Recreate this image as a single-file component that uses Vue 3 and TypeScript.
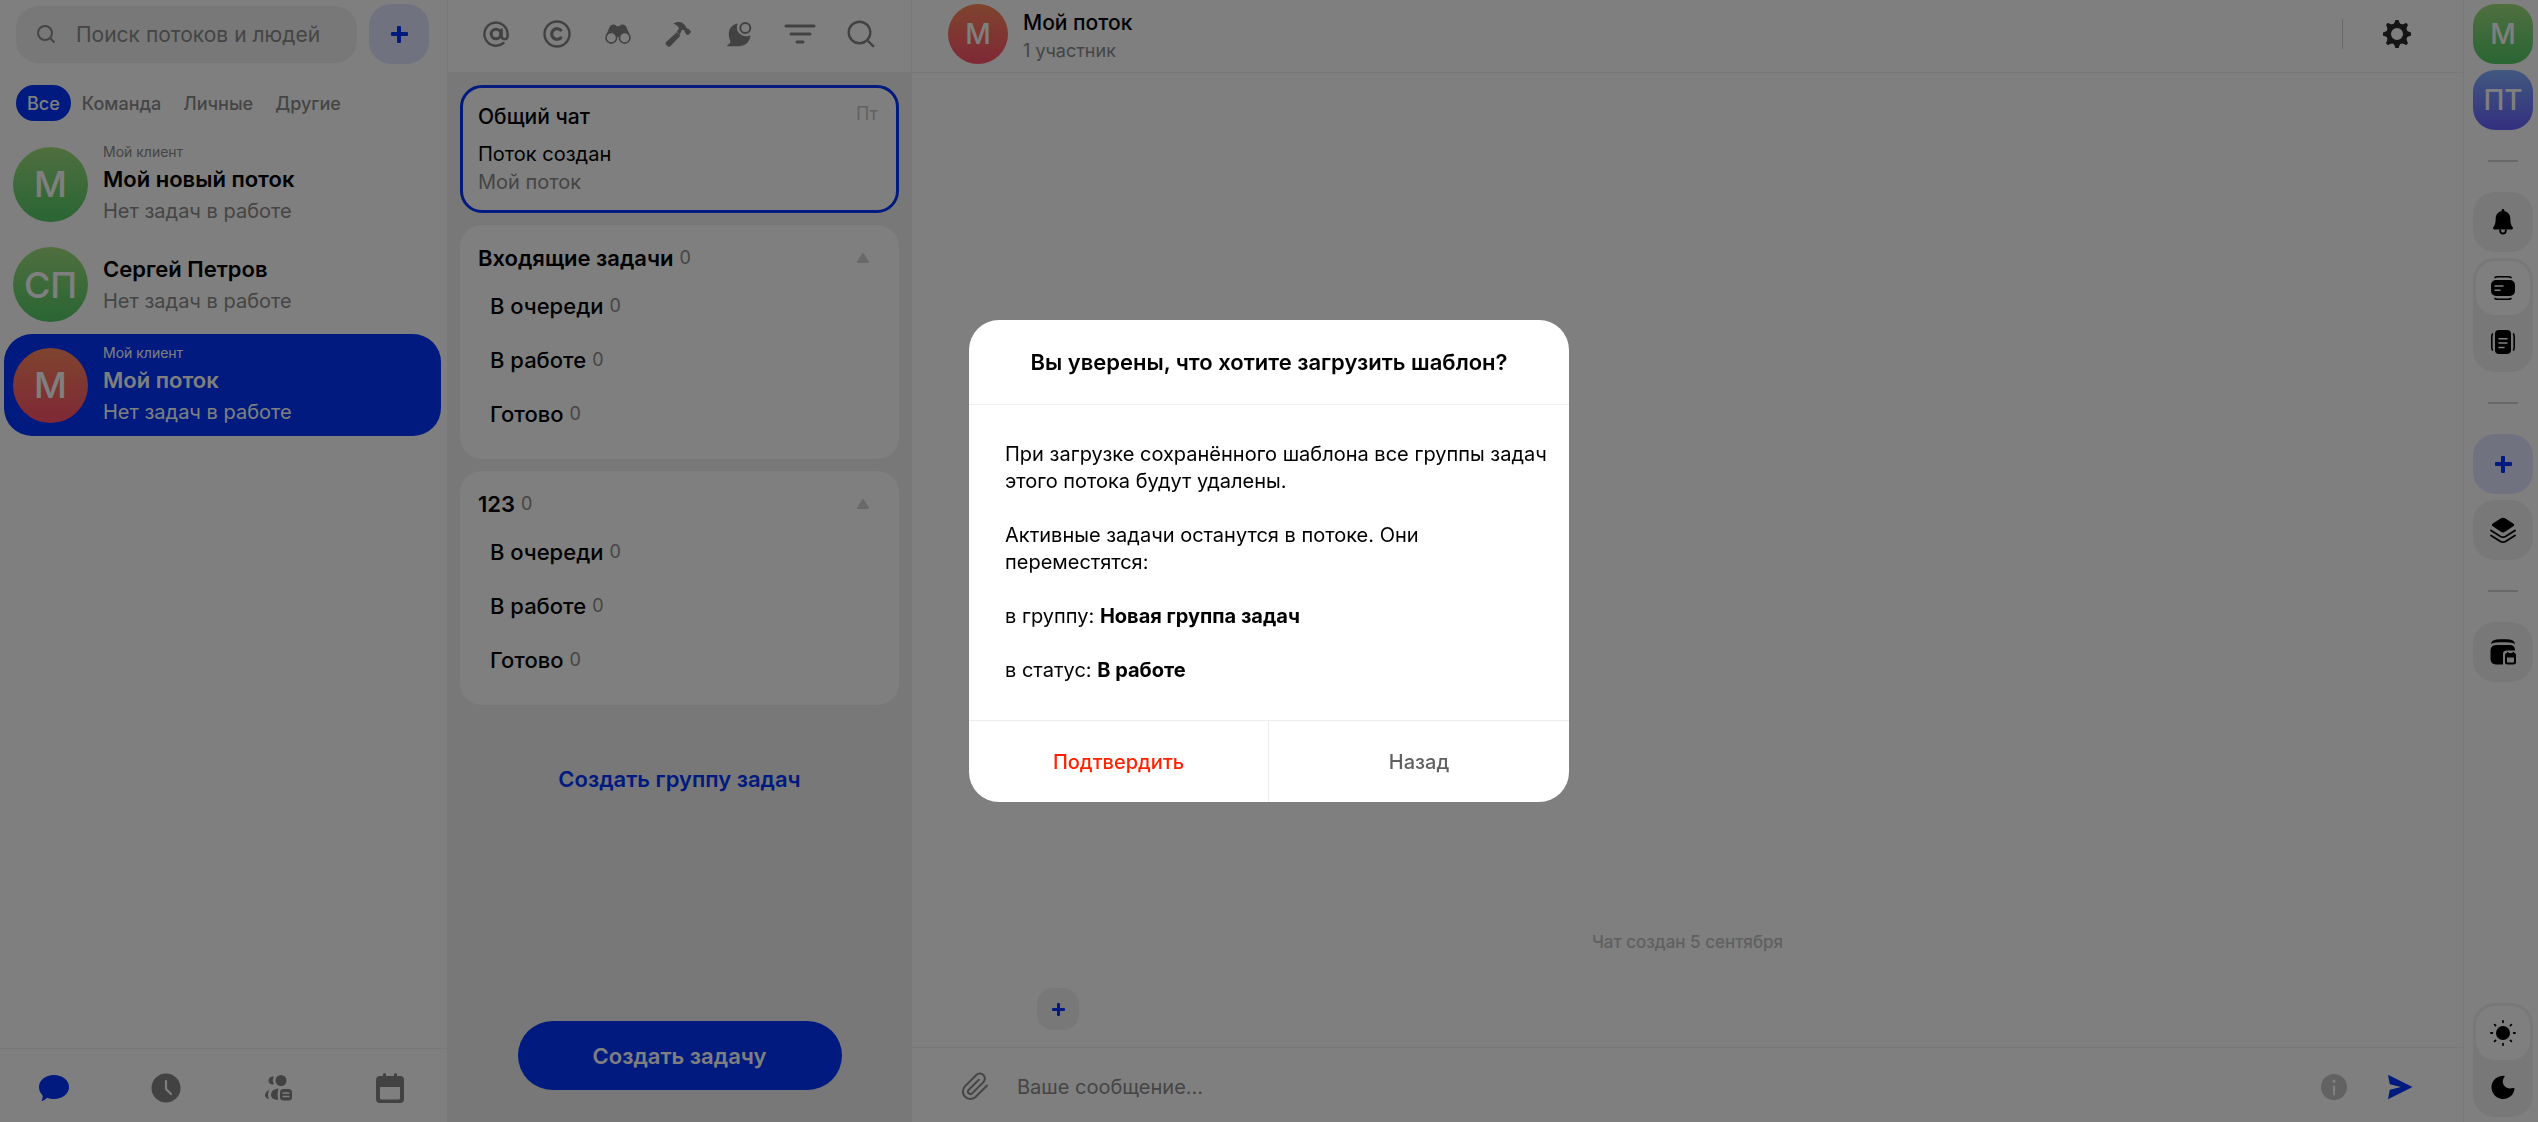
<script setup lang="ts">
import { ref } from 'vue'

interface Flow {
  id: number
  initials: string
  tone: 'green' | 'red'
  client?: string
  title: string
  status: string
}

interface TaskGroup {
  name: string
  count: number
  columns: { name: string; count: number }[]
}

const tabs = ['Все', 'Команда', 'Личные', 'Другие']
const activeTab = ref('Все')
const activeFlow = ref(3)
const search = ref('')
const message = ref('')

const flows: Flow[] = [
  { id: 1, initials: 'М', tone: 'green', client: 'Мой клиент', title: 'Мой новый поток', status: 'Нет задач в работе' },
  { id: 2, initials: 'СП', tone: 'green', title: 'Сергей Петров', status: 'Нет задач в работе' },
  { id: 3, initials: 'М', tone: 'red', client: 'Мой клиент', title: 'Мой поток', status: 'Нет задач в работе' },
]

const columns = () => [
  { name: 'В очереди', count: 0 },
  { name: 'В работе', count: 0 },
  { name: 'Готово', count: 0 },
]

const groups: TaskGroup[] = [
  { name: 'Входящие задачи', count: 0, columns: columns() },
  { name: '123', count: 0, columns: columns() },
]

const gearTeeth = [0, 45, 90, 135, 180, 225, 270, 315]
</script>

<template>
  <div class="app">
    <aside class="flows">
      <div class="flows-top">
        <label class="search">
          <svg width="20" height="20" viewBox="0 0 20 20" fill="none" stroke="currentColor" stroke-width="2">
            <circle cx="9" cy="9" r="7" /><path d="M14 14l4 4" stroke-linecap="round" />
          </svg>
          <input v-model="search" type="text" placeholder="Поиск потоков и людей" aria-label="Поиск потоков и людей" />
        </label>
        <button class="tile tint" aria-label="Создать поток">
          <svg width="18" height="18" viewBox="0 0 18 18" fill="currentColor"><rect x="7" y="1" width="4" height="17" rx="1" /><rect x="1" y="7" width="17" height="4" rx="1" /></svg>
        </button>
      </div>

      <div class="tabs">
        <button v-for="tab in tabs" :key="tab" class="tab" :class="{ active: tab === activeTab }" @click="activeTab = tab">{{ tab }}</button>
      </div>

      <div class="flow-list">
        <button v-for="flow in flows" :key="flow.id" class="flow" :class="{ active: flow.id === activeFlow }" @click="activeFlow = flow.id">
          <span class="avatar large" :class="flow.tone">{{ flow.initials }}</span>
          <span class="flow-text">
            <span v-if="flow.client" class="flow-client">{{ flow.client }}</span>
            <span class="flow-title">{{ flow.title }}</span>
            <span class="flow-status">{{ flow.status }}</span>
          </span>
        </button>
      </div>

      <nav class="bottom-nav">
        <button class="current" aria-label="Чаты">
          <svg width="32" height="28" viewBox="0 0 32 28" fill="currentColor"><path d="M16 1c8.500 0 15 5.200 15 12s-6.500 12-15 12c-2.600 0-4.800-.4-7-1.300C7.500 25.500 5.500 27 3.400 27c1-1.500 1.500-3.500 1.200-5.600C2.200 19.200 1 16.300 1 13 1 6.200 7.500 1 16 1z" /></svg>
        </button>
        <button aria-label="Время">
          <svg width="30" height="30" viewBox="0 0 30 30"><circle cx="15" cy="15" r="14.500" fill="currentColor" /><path d="M15 8v8l5 5" fill="none" stroke="#fff" stroke-width="2.200" stroke-linecap="round" stroke-linejoin="round" /></svg>
        </button>
        <button aria-label="Команда">
          <svg width="28" height="28" viewBox="0 0 28 28" fill="currentColor">
            <circle cx="17" cy="6.500" r="5.500" /><path d="M10 2.800a4 4 0 1 0 0 7.400 7 7 0 0 1 0-7.400z" />
            <path d="M5.500 16C2.800 16.800 1 19 1 21.500c0 1.700 1.600 2.900 4 3.500-1.500-3.200-1.200-6.300.5-9z" />
            <path d="M14.500 14.500C9.600 14.800 7 17.500 7 21c0 3.200 3 4.800 7.300 5-1-3.500-.9-8 .2-11.500z" />
            <rect x="16" y="15" width="12" height="11.500" rx="3.500" /><path d="M18.500 19h7M18.500 22.500h7" stroke="#fff" stroke-width="1.500" />
          </svg>
        </button>
        <button aria-label="Календарь">
          <svg width="28" height="30" viewBox="0 0 28 30" fill="currentColor"><path fill-rule="evenodd" d="M4 3h3V1.500a1.500 1.500 0 0 1 3 0V3h8V1.500a1.500 1.500 0 0 1 3 0V3h3a4 4 0 0 1 4 4v19a4 4 0 0 1-4 4H4a4 4 0 0 1-4-4V7a4 4 0 0 1 4-4zm0 11v11a1.500 1.500 0 0 0 1.500 1.500h17A1.500 1.500 0 0 0 24 25V14z" /></svg>
        </button>
      </nav>
    </aside>

    <section class="board">
      <header class="board-tools">
        <button aria-label="Упоминания">
          <svg width="26" height="26" viewBox="0 0 26 26" fill="none" stroke="currentColor" stroke-linecap="round">
            <path d="M20.500 22A11.600 11.600 0 1 1 24.600 13v2c0 2-1.300 3.200-3 3.200s-3-1.200-3-3.200V8.500" stroke-width="2.400" /><circle cx="13" cy="13" r="4.800" stroke-width="3" />
          </svg>
        </button>
        <button aria-label="Созданные мной">
          <svg width="28" height="28" viewBox="0 0 28 28" fill="none" stroke="currentColor">
            <circle cx="14" cy="14" r="12.500" stroke-width="2.400" /><path d="M18.500 11.200a5.300 5.300 0 1 0 0 5.600" stroke-width="3.200" />
          </svg>
        </button>
        <button aria-label="Наблюдаю">
          <svg width="26" height="26" viewBox="0 0 26 26">
            <path fill="currentColor" d="M1 14.500L4.600 6C5.300 4.300 7 3.300 9 3.500c1.300.1 2.100.8 2.500 1.700h3c.4-.9 1.200-1.600 2.500-1.700 2-.2 3.700.8 4.400 2.500l3.600 8.500-5 3-5-1.500h-4l-5 1.500z" />
            <circle cx="6.300" cy="16.800" r="5.300" fill="#fff" stroke="currentColor" stroke-width="1.600" /><circle cx="19.700" cy="16.800" r="5.300" fill="#fff" stroke="currentColor" stroke-width="1.600" />
          </svg>
        </button>
        <button aria-label="В работе">
          <svg width="26" height="26" viewBox="0 0 26 26" fill="currentColor">
            <path d="M11.800 11.200l3.600 3.600L5.300 25.200c-.8.800-1.900.8-2.700 0L1.100 23.700c-.8-.8-.8-1.900 0-2.700z" />
            <path d="M8.400 2.700C11.500.5 16.200.6 18.700 3l1.900 2c.4.400.6 1 .6 1.700l.9.900 1-.2 2.500 2.500c.5.500.5 1 0 1.500l-2.200 2.300c-.5.500-1 .5-1.500 0L19.600 11l.1-1.200-.9-.9c-.6.200-1.200.1-1.700-.4l-2.400 5.200-2.900-2.900 2.200-3.400c-.8-2.500-2.800-4-5.600-4.700z" />
          </svg>
        </button>
        <button aria-label="Непрочитанные">
          <svg width="26" height="26" viewBox="0 0 26 26">
            <path fill="currentColor" d="M12 2.500C6 3.500 2.500 8 2.800 13.500c.1 3 .8 4.500 1.500 6.500.5 1.500-1 3.200-2.800 4-.7.500-.4 1.300.5 1.300h10.500c6.500 0 11.700-4.500 12-11-5.500 2.500-12.500-.500-13.500-6C10.700 6 11 4 12 2.500z" />
            <circle cx="19.300" cy="7" r="5" fill="none" stroke="currentColor" stroke-width="2" />
          </svg>
        </button>
        <button aria-label="Фильтр">
          <svg width="32" height="22" viewBox="0 0 32 22" stroke="currentColor" stroke-width="3" stroke-linecap="round"><path d="M2 3h28M7 11h19M13 19h6" /></svg>
        </button>
        <button aria-label="Поиск задач">
          <svg width="28" height="28" viewBox="0 0 28 28" fill="none" stroke="currentColor" stroke-width="2.400"><circle cx="12.500" cy="12.500" r="10.800" /><path d="M20.500 20.500l5.700 5.700" stroke-linecap="round" /></svg>
        </button>
      </header>

      <div class="board-body">
        <button class="card chat-card">
          <span class="chat-head"><span class="chat-title">Общий чат</span><time class="chat-day">Пт</time></span>
          <span class="chat-last">Поток создан</span>
          <span class="chat-flow">Мой поток</span>
        </button>

        <section v-for="group in groups" :key="group.name" class="card group">
          <h2 class="group-head">
            <span>{{ group.name }}</span><span class="count">{{ group.count }}</span>
            <svg class="caret" width="12" height="10" viewBox="0 0 12 10"><path fill="currentColor" d="M5 .7a1.200 1.200 0 0 1 2 0l4.700 7.500A1.100 1.100 0 0 1 10.800 10H1.200a1.100 1.100 0 0 1-.9-1.800z" /></svg>
          </h2>
          <button v-for="column in group.columns" :key="column.name" class="column">
            <span>{{ column.name }}</span><span class="count">{{ column.count }}</span>
          </button>
        </section>

        <button class="add-group">Создать группу задач</button>
        <button class="add-task">Создать задачу</button>
      </div>
    </section>

    <main class="chat">
      <header class="chat-top">
        <span class="avatar red">М</span>
        <div class="chat-name">
          <h1>Мой поток</h1>
          <p>1 участник</p>
        </div>
        <span class="rule"></span>
        <button class="gear" aria-label="Настройки">
          <svg width="28" height="28" viewBox="-14 -14 28 28" fill="currentColor">
            <path fill-rule="evenodd" d="M0-10.700a10.700 10.700 0 1 0 0 21.400 10.700 10.700 0 0 0 0-21.400zM0-6a6 6 0 1 1 0 12A6 6 0 0 1 0-6z" />
            <path v-for="angle in gearTeeth" :key="angle" :transform="`rotate(${angle})`" d="M-3.500-9.500l1.500-3a2 2 0 0 1 4 0l1.500 3z" />
          </svg>
        </button>
      </header>

      <div class="messages">
        <p class="created">Чат создан 5 сентября</p>
        <button class="quick-add" aria-label="Добавить">
          <svg width="14" height="14" viewBox="0 0 14 14" fill="currentColor"><rect x="6" y="1" width="3" height="13" rx="1" /><rect x="1" y="6" width="13" height="3" rx="1" /></svg>
        </button>
      </div>

      <footer class="composer">
        <button class="clip" aria-label="Прикрепить файл">
          <svg width="30" height="30" viewBox="0 0 30 30" fill="none" stroke="currentColor" stroke-width="2" stroke-linecap="round" stroke-linejoin="round"><path d="M27 13.500L15.500 25a7.500 7.500 0 0 1-10.600-10.600L16.300 3a5 5 0 0 1 7.100 7.100L12 21.500a2.500 2.500 0 0 1-3.500-3.500L18.800 7.700" /></svg>
        </button>
        <input v-model="message" type="text" placeholder="Ваше сообщение..." aria-label="Ваше сообщение" />
        <button class="info" aria-label="Информация">
          <svg width="26" height="26" viewBox="0 0 26 26"><circle cx="13" cy="13" r="13" fill="currentColor" /><circle cx="13" cy="7.300" r="1.600" fill="#fff" /><path d="M13 12.500v8" stroke="#fff" stroke-width="2.200" stroke-linecap="round" /></svg>
        </button>
        <button class="send" aria-label="Отправить">
          <svg width="26" height="26" viewBox="0 0 26 26" fill="currentColor"><path d="M1 .8L25.500 13 1 25.200l1.800-9.400L14 13 2.800 10.200z" /></svg>
        </button>
      </footer>
    </main>

    <aside class="rail">
      <button class="tile avatar green">М</button>
      <button class="tile avatar violet">ПТ</button>
      <hr />
      <button class="tile" aria-label="Уведомления">
        <svg width="20" height="26" viewBox="0 0 20 26"><path fill="currentColor" d="M10 0c.9 0 1.400.7 1.400 1.600v.6c3.600.7 5.800 3.300 5.900 7.300.1 4.500.6 6.300 2.200 8.500.9 1.300.2 2.500-1.300 2.500H1.800C.3 20.500-.4 19.300.5 18c1.600-2.200 2.100-4 2.200-8.500.1-4 2.300-6.600 5.900-7.300v-.6C8.600.7 9.100 0 10 0z" /><path d="M7.200 20.500v1.200a2.800 2.800 0 0 0 5.600 0v-1.200" fill="none" stroke="currentColor" stroke-width="1.800" /></svg>
      </button>
      <div class="switch">
        <button class="on" aria-label="Горизонтальный вид">
          <svg width="24" height="24" viewBox="0 0 24 24"><rect x="0" y="4" width="24" height="16" rx="5" fill="currentColor" /><path d="M4 1.500Q5 .8 7 .8h10q2 0 3 .7M4 22.500q1 .7 3 .7h10q2 0 3-.7" fill="none" stroke="currentColor" stroke-width="1.600" stroke-linecap="round" /><path d="M4 10h8M4 14.200h5" stroke="#fff" stroke-width="1.500" stroke-linecap="round" /></svg>
        </button>
        <button aria-label="Вертикальный вид">
          <svg width="24" height="24" viewBox="0 0 24 24"><rect x="4" y="0" width="16" height="24" rx="4" fill="currentColor" /><path d="M1.500 4Q.8 5 .8 7v10q0 2 .7 3M22.500 4q.7 1 .7 3v10q0 2-.7 3" fill="none" stroke="currentColor" stroke-width="1.600" stroke-linecap="round" /><path d="M8 8.700h8M8 13h8M8 17.500h5" stroke="#fff" stroke-width="1.500" stroke-linecap="round" /></svg>
        </button>
      </div>
      <hr />
      <button class="tile tint" aria-label="Добавить">
        <svg width="18" height="18" viewBox="0 0 18 18" fill="currentColor"><rect x="7" y="1" width="4" height="17" rx="1" /><rect x="1" y="7" width="17" height="4" rx="1" /></svg>
      </button>
      <button class="tile" aria-label="Шаблоны">
        <svg width="26" height="26" viewBox="0 0 26 26"><path fill="currentColor" d="M11 1.200q2-1 4 0l8.200 5.200q2 1.400 0 2.900L15 14.800q-2 1.200-4 0L2.800 9.300q-2-1.500 0-2.900z" /><path d="M1 13.500l9.500 6q2.500 1.400 5 0l9.500-6M1 18.500l9.500 6q2.500 1.200 5 0l9.500-6" fill="none" stroke="currentColor" stroke-width="1.800" stroke-linecap="round" /></svg>
      </button>
      <hr />
      <button class="tile" aria-label="Архив задач">
        <svg width="26" height="26" viewBox="0 0 26 26"><path fill="currentColor" d="M1 5.200C1.600 2 3.500 1 6.500.6c4.300-.6 8.700-.6 13 0 3 .4 4.900 1.400 5.500 4.600C23.600 4 22 3.600 20 3.500c-4.700-.4-9.300-.4-14 0-2 .1-3.600.5-5 1.700z" /><path fill="currentColor" d="M7 6h12c4 0 6 1.500 6 5.500h-8.500c-2.300 0-3.500 1.200-3.500 3.500v10.500H7c-4.500 0-6.500-2-6.500-6.500v-6.500C.5 8 2.500 6 7 6z" /><path fill="currentColor" fill-rule="evenodd" d="M17 14v-1h1.500v1h4v-1H24v1a2 2 0 0 1 2 2v7a2.500 2.500 0 0 1-2.500 2.500h-6A2.500 2.500 0 0 1 15 23v-7a2 2 0 0 1 2-2zm0 4.500v4.200c0 .5.300.8.800.8h5.400c.5 0 .8-.3.800-.8v-4.200z" /></svg>
      </button>
      <div class="switch theme">
        <button class="on" aria-label="Светлая тема">
          <svg width="26" height="26" viewBox="0 0 26 26"><circle cx="13" cy="13" r="7" fill="currentColor" /><path d="M13 1v1.300M13 23.700V25M1 13h1.300M23.700 13H25M4.600 4.600l1 1M20.400 20.400l1 1M4.600 21.400l1-1M20.400 5.600l1-1" stroke="currentColor" stroke-width="1.800" stroke-linecap="round" /></svg>
        </button>
        <button aria-label="Тёмная тема">
          <svg width="24" height="24" viewBox="0 0 24 24"><path fill="currentColor" d="M12.800.8C13.700.8 14 1.500 13.500 2c-4.600 5.500.500 13.500 8.500 11 1-.3 1.700.3 1.500 1.200A11.600 11.600 0 1 1 12.800.8z" /></svg>
        </button>
      </div>
    </aside>

    <div class="overlay">
      <section class="dialog" role="dialog" aria-modal="true" aria-labelledby="dialog-title">
        <h2 id="dialog-title">Вы уверены, что хотите загрузить шаблон?</h2>
        <div class="dialog-body">
          <p>При загрузке сохранённого шаблона все группы задач этого потока будут удалены.</p>
          <p>Активные задачи останутся в потоке. Они переместятся:</p>
          <p>в группу: <b>Новая группа задач</b></p>
          <p>в статус: <b>В работе</b></p>
        </div>
        <div class="dialog-actions">
          <button class="danger">Подтвердить</button>
          <button>Назад</button>
        </div>
      </section>
    </div>
  </div>
</template>

<style>
body {
  margin: 0;
}
</style>

<style scoped>
.app {
  --blue: #0035ff;
  --gray: #8a8a8a;
  --line: #f0f0f0;
  --soft: #f0f0f0;
  display: flex;
  height: 100vh;
  overflow: hidden;
  background: #fff;
  color: #000;
  font-family: Inter, "Liberation Sans", sans-serif;
  font-size: 20px;
}

.app *,
.app {
  box-sizing: border-box;
}

button {
  display: flex;
  align-items: center;
  justify-content: center;
  padding: 0;
  border: 0;
  background: none;
  color: inherit;
  font: inherit;
  cursor: pointer;
}

input {
  flex: 1;
  min-width: 0;
  padding: 0;
  border: 0;
  outline: 0;
  background: none;
  font: inherit;
}

input::placeholder {
  color: var(--gray);
  opacity: 1;
}

h1,
h2,
p {
  margin: 0;
}

svg {
  display: block;
  flex: none;
}

.tile {
  flex: none;
  width: 60px;
  height: 60px;
  border-radius: 22px;
  background: var(--soft);
}

.tint {
  background: #e1e6ff;
  color: var(--blue);
}

.avatar {
  display: flex;
  flex: none;
  align-items: center;
  justify-content: center;
  width: 60px;
  height: 60px;
  border-radius: 50%;
  color: #fff;
  font-size: 28px;
  font-weight: 500;
}

.avatar.tile {
  border-radius: 22px;
}

.avatar.large {
  width: 75px;
  height: 75px;
  font-size: 36px;
}

.green {
  background: linear-gradient(#a0de7e, #54cb68);
}

.red {
  background: linear-gradient(#ff885e, #ff516a);
}

.violet {
  background: linear-gradient(#82b1ff, #665fff);
}

/* Flow list */
.flows {
  display: flex;
  flex: none;
  flex-direction: column;
  width: 447px;
}

.flows-top {
  display: flex;
  align-items: center;
  gap: 12px;
  padding: 4px 18px 0 16px;
}

.search {
  display: flex;
  flex: 1;
  align-items: center;
  gap: 20px;
  min-width: 0;
  height: 57px;
  padding: 0 20px;
  border-radius: 22px;
  background: var(--soft);
  color: var(--gray);
  font-size: 21px;
}

.tabs {
  display: flex;
  padding: 21px 16px 12px;
}

.tab {
  height: 36px;
  padding: 0 11px;
  border-radius: 18px;
  color: var(--gray);
  font-size: 18px;
  font-weight: 500;
}

.tab.active {
  background: var(--blue);
  color: #fff;
}

.flow-list {
  flex: 1;
  padding: 0 6px 0 4px;
}

.flow {
  justify-content: flex-start;
  gap: 15px;
  width: 100%;
  min-height: 99px;
  padding: 8px 9px;
  border-radius: 28px;
  text-align: left;
}

.flow-text {
  display: flex;
  flex-direction: column;
}

.flow-client {
  color: var(--gray);
  font-size: 14px;
  line-height: 22px;
}

.flow-title {
  font-size: 22px;
  font-weight: 600;
  line-height: 32px;
}

.flow-status {
  color: var(--gray);
  line-height: 32px;
}

.flow.active {
  background: var(--blue);
  color: #fff;
}

.flow.active .flow-client,
.flow.active .flow-status {
  color: #fff;
}

.bottom-nav {
  display: flex;
  justify-content: space-between;
  height: 74px;
  padding: 4px 33px 0 30px;
  border-top: 1px solid var(--line);
  color: #848484;
}

.bottom-nav button {
  width: 48px;
}

.bottom-nav .current {
  color: var(--blue);
}

/* Task board */
.board {
  display: flex;
  flex: none;
  flex-direction: column;
  width: 465px;
  border-right: 1px solid var(--line);
  border-left: 1px solid var(--line);
}

.board-tools {
  display: grid;
  grid-template-columns: repeat(7, 1fr);
  height: 72px;
  padding: 0 20px 4px 18px;
  color: #848484;
}

.board-body {
  display: flex;
  flex: 1;
  flex-direction: column;
  gap: 12px;
  padding: 13px 12px 32px;
  background: var(--soft);
}

.card {
  border-radius: 22px;
  background: #fff;
}

.chat-card {
  flex-direction: column;
  align-items: stretch;
  justify-content: flex-start;
  height: 128px;
  padding: 15px 18px 0 15px;
  border: 3px solid var(--blue);
  line-height: 28px;
  text-align: left;
}

.chat-head {
  display: flex;
  justify-content: space-between;
  margin-bottom: 9px;
}

.chat-title {
  font-size: 21px;
  font-weight: 500;
}

.chat-day {
  color: #c4c4c4;
  font-size: 18px;
  line-height: 22px;
}

.chat-flow {
  color: var(--gray);
}

.group {
  padding: 12px 18px 18px;
}

.group-head {
  display: flex;
  align-items: center;
  height: 42px;
  font-size: 22px;
  font-weight: 600;
}

.count {
  margin-left: 6px;
  padding-bottom: 2px;
  color: var(--gray);
  font-size: 18px;
  font-weight: 400;
}

.caret {
  margin-right: 12px;
  margin-left: auto;
  color: #d2d2d2;
}

.column {
  justify-content: flex-start;
  width: 100%;
  height: 54px;
  padding-left: 12px;
  font-size: 22px;
  font-weight: 500;
}

.add-group {
  margin-top: 35px;
  height: 53px;
  color: var(--blue);
  font-size: 22px;
  font-weight: 600;
}

.add-task {
  align-self: center;
  width: 324px;
  height: 69px;
  margin-top: auto;
  border-radius: 35px;
  background: var(--blue);
  color: #fff;
  font-size: 22px;
  font-weight: 600;
}

/* Chat */
.chat {
  display: flex;
  flex: 1;
  flex-direction: column;
  min-width: 0;
}

.chat-top {
  display: flex;
  align-items: center;
  gap: 15px;
  height: 73px;
  padding: 0 52px 4px 36px;
  border-bottom: 1px solid var(--line);
}

.chat-name {
  flex: 1;
  padding-top: 6px;
}

.chat-name h1 {
  font-size: 21px;
  font-weight: 500;
  line-height: 28px;
}

.chat-name p {
  color: var(--gray);
  font-size: 18px;
  line-height: 28px;
}

.rule {
  width: 1px;
  height: 30px;
  background: #d0d0d0;
}

.gear {
  margin-left: 25px;
  color: #2a2a2a;
}

.messages {
  display: flex;
  flex: 1;
  flex-direction: column;
  justify-content: flex-end;
  padding-bottom: 17px;
}

.created {
  margin-bottom: 35px;
  color: #c0c0c0;
  font-size: 17px;
  font-weight: 500;
  line-height: 22px;
  text-align: center;
}

.quick-add {
  width: 42px;
  height: 42px;
  margin-left: 125px;
  border-radius: 16px;
  background: var(--soft);
  color: var(--blue);
}

.composer {
  display: flex;
  align-items: center;
  height: 75px;
  padding: 4px 50px 0 48px;
  border-top: 1px solid var(--line);
}

.clip {
  margin-right: 27px;
  color: var(--gray);
}

.info {
  margin-right: 40px;
  color: #c4c4c4;
}

.send {
  color: var(--blue);
}

/* Right rail */
.rail {
  display: flex;
  flex: none;
  flex-direction: column;
  gap: 6px;
  width: 75px;
  padding: 4px 5px 5px 9px;
  border-left: 1px solid var(--line);
}

.rail hr {
  width: 30px;
  height: 2px;
  margin: 24px auto;
  border: 0;
  background: #d0d0d0;
}

.switch {
  display: flex;
  flex-direction: column;
  width: 60px;
  padding: 3px;
  border-radius: 22px;
  background: var(--soft);
}

.switch button {
  width: 54px;
  height: 54px;
  border-radius: 19px;
}

.switch .on {
  background: #fff;
}

.theme {
  margin-top: auto;
}

/* Confirmation dialog */
.overlay {
  position: fixed;
  inset: 0;
  display: flex;
  align-items: center;
  justify-content: center;
  background: rgba(0, 0, 0, 0.5);
}

.dialog {
  width: 600px;
  overflow: hidden;
  border-radius: 30px;
  background: #fff;
}

.dialog h2 {
  padding: 28px 36px;
  border-bottom: 1px solid #ededed;
  font-size: 22px;
  font-weight: 600;
  line-height: 28px;
  text-align: center;
}

.dialog-body {
  display: flex;
  flex-direction: column;
  gap: 27px;
  padding: 36px 20px 36px 36px;
  line-height: 27px;
}

.dialog-body b {
  font-weight: 700;
}

.dialog-actions {
  display: grid;
  grid-template-columns: 1fr 1fr;
  height: 82px;
  border-top: 1px solid #ededed;
}

.dialog-actions button {
  color: #606060;
  font-weight: 500;
}

.dialog-actions .danger {
  border-right: 1px solid #ededed;
  color: #ff2200;
}
</style>
